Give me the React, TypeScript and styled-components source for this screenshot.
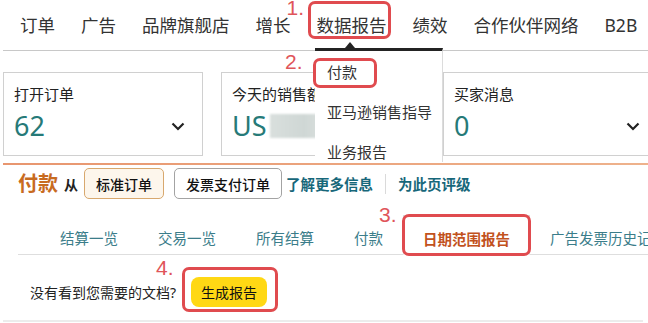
import styled, { createGlobalStyle } from 'styled-components';

const GlobalStyle = createGlobalStyle`
  html, body {
    margin: 0;
    padding: 0;
    background: #fff;
  }
  body {
    font-family: "Noto Sans", "Noto Sans CJK SC", sans-serif;
    color: #222;
  }
`;

const Page = styled.div`
  width: 648px;
  height: 323px;
  overflow: hidden;
  padding-left: 3px;
  box-sizing: border-box;
`;

// upper screenshot: nav + metric cards + open menu
const TopSection = styled.div`
  position: relative;
  height: 162px;
  overflow: hidden;
`;

const Nav = styled.nav`
  display: flex;
  align-items: center;
  height: 50px;
  padding-left: 17px;
  gap: 26px;
  border-bottom: 1px solid #c8c8c8;
`;

const NavItem = styled.span`
  position: relative;
  font-size: 17.5px;
  line-height: 20px;
  color: #333;
  white-space: nowrap;
`;

// red annotation box drawn over a part of the UI
const Marked = styled.span<{ $inset: string }>`
  position: relative;
  display: inline-flex;
  &::after {
    content: '';
    position: absolute;
    inset: ${p => p.$inset};
    border: 3px solid #e04b4f;
    border-radius: 7px;
    pointer-events: none;
  }
`;

const Num = styled.span<{ $x: number; $y: number }>`
  position: absolute;
  left: ${p => p.$x}px;
  top: ${p => p.$y}px;
  font-family: "Liberation Sans", sans-serif;
  font-size: 21px;
  line-height: 1;
  color: #e0555a;
  white-space: nowrap;
`;

const Menu = styled.div`
  position: absolute;
  top: 33px;
  left: -1.5px;
  width: 127px;
  height: 114px;
  background: #fff;
  border-top: 3px solid #232323;
  border-right: 1px solid #dcdcdc;
  z-index: 2;
  &::before {
    content: '';
    position: absolute;
    top: -9px;
    left: 30px;
    border-left: 5px solid transparent;
    border-right: 5px solid transparent;
    border-bottom: 6px solid #232323;
  }
`;

const MenuItem = styled.div`
  display: flex;
  align-items: center;
  height: 40px;
  padding-left: 12px;
  font-size: 15px;
  color: #333;
  white-space: nowrap;
`;

const MenuText = styled.span`
  line-height: 20px;
`;

const CardsRow = styled.div`
  display: grid;
  grid-template-columns: 200px 204px 215px;
  column-gap: 18px;
  margin-top: 21px;
`;

const Card = styled.div`
  height: 84px;
  box-sizing: border-box;
  border: 1px solid #d0d0d0;
  padding: 11px 17px 0 10px;
  overflow: hidden;
`;

const CardTitle = styled.div`
  font-size: 15px;
  line-height: 20px;
  color: #222;
  white-space: nowrap;
`;

const ValueRow = styled.div`
  display: flex;
  align-items: center;
  justify-content: space-between;
  margin-top: 6px;
  height: 32px;
`;

const Value = styled.span`
  display: flex;
  align-items: center;
  font-size: 27px;
  line-height: 32px;
  color: #267a78;
`;

const Blur = styled.span`
  display: inline-block;
  width: 57px;
  height: 24px;
  margin-left: 3px;
  background: linear-gradient(90deg, #d9dfdd, #cfd7d5 60%, #dde2e0);
  filter: blur(1px);
`;

const BottomSection = styled.div``;

const OrangeRule = styled.div`
  height: 2px;
  margin-top: 1px;
  background: linear-gradient(90deg, #e8966f, #eeb28c);
`;

const HeaderRow = styled.div`
  display: flex;
  align-items: center;
  height: 31px;
  margin-top: 3px;
  padding-left: 15px;
  gap: 6px;
`;

const Heading = styled.span`
  font-size: 20px;
  font-weight: 700;
  color: #c86b1f;
  line-height: 24px;
`;

const From = styled.span`
  font-size: 14px;
  font-weight: 700;
  color: #222;
`;

const ButtonGroup = styled.div`
  display: flex;
  gap: 10px;
`;

const ToggleButton = styled.button<{ $active?: boolean }>`
  height: 31px;
  padding: 0 11px;
  border-radius: 5px;
  border: 1px solid ${p => (p.$active ? '#d8a86e' : '#a3a3a3')};
  background: ${p => (p.$active ? '#fdf6ec' : '#fff')};
  font-family: inherit;
  font-size: 14px;
  font-weight: 500;
  color: #111;
`;

const Links = styled.div`
  display: flex;
  align-items: center;
  gap: 12px;
  margin-left: -2px;
`;

const LinkText = styled.span`
  font-size: 14.5px;
  font-weight: 700;
  color: #17677a;
  white-space: nowrap;
`;

const Sep = styled.span`
  width: 1px;
  height: 20px;
  background: #dadada;
`;

const TabsBar = styled.div`
  display: flex;
  height: 39px;
  margin: 16px 0 0 15px;
  padding-left: 22px;
  border-bottom: 1px solid #dedede;
`;

const Tab = styled.div<{ $active?: boolean }>`
  display: flex;
  align-items: center;
  padding: 6px 20px 0;
  font-size: 14.5px;
  color: #3b7d8a;
  white-space: nowrap;
  ${p =>
    p.$active &&
    `
    padding: 6px 19px 0;
    font-weight: 700;
    color: #c2521d;
    background: #fff;
    border: 1px solid #dcdcdc;
    border-bottom-color: #fff;
    margin-bottom: -1px;
  `}
`;

const TabMark = styled(Marked)`
  display: flex;
  align-self: stretch;
`;

const BottomRow = styled.div`
  display: flex;
  align-items: center;
  height: 30px;
  margin-top: 22px;
  padding-left: 27px;
  gap: 15px;
`;

const Prompt = styled.span`
  font-size: 14px;
  color: #222;
`;

const YellowButton = styled.button`
  height: 30px;
  padding: 0 10px;
  border: none;
  border-radius: 8px;
  background: #ffd814;
  font-family: inherit;
  font-size: 14px;
  color: #111;
`;

const BottomRule = styled.div`
  width: 640px;
  height: 2px;
  margin-top: 13px;
  background: #ececec;
`;

const Chevron = () => (
  <svg width="14" height="9" viewBox="0 0 14 9">
    <polyline points="1.5,1.5 7,7 12.5,1.5" fill="none" stroke="#222" strokeWidth="2.2" />
  </svg>
);

const navItems = ['订单', '广告', '品牌旗舰店', '增长'];
const tabs = ['结算一览', '交易一览', '所有结算', '付款'];

export default function App() {
  return (
    <Page>
      <GlobalStyle />
      <TopSection>
        <Nav>
          {navItems.map(n => (
            <NavItem key={n}>{n}</NavItem>
          ))}
          <NavItem>
            <Marked $inset="-14px -4.5px -4px -9px">数据报告</Marked>
            <Num $x={-30} $y={-18}>1.</Num>
            <Menu>
              <MenuItem style={{ height: 41 }}>
                <Marked $inset="-4px -20px -6px -14px">
                  <MenuText>付款</MenuText>
                  <Num $x={-42} $y={-11}>2.</Num>
                </Marked>
              </MenuItem>
              <MenuItem>亚马逊销售指导</MenuItem>
              <MenuItem>业务报告</MenuItem>
            </Menu>
          </NavItem>
          <NavItem>绩效</NavItem>
          <NavItem>合作伙伴网络</NavItem>
          <NavItem>B2B</NavItem>
        </Nav>
        <CardsRow>
          <Card>
            <CardTitle>打开订单</CardTitle>
            <ValueRow>
              <Value>62</Value>
              <Chevron />
            </ValueRow>
          </Card>
          <Card>
            <CardTitle>今天的销售额</CardTitle>
            <ValueRow>
              <Value>
                US<Blur />
              </Value>
            </ValueRow>
          </Card>
          <Card>
            <CardTitle>买家消息</CardTitle>
            <ValueRow>
              <Value>0</Value>
              <Chevron />
            </ValueRow>
          </Card>
        </CardsRow>
      </TopSection>

      <BottomSection>
        <OrangeRule />
        <HeaderRow>
          <Heading>付款</Heading>
          <From>从</From>
          <ButtonGroup>
            <ToggleButton $active>标准订单</ToggleButton>
            <ToggleButton>发票支付订单</ToggleButton>
          </ButtonGroup>
          <Links>
            <LinkText>了解更多信息</LinkText>
            <Sep />
            <LinkText>为此页评级</LinkText>
          </Links>
        </HeaderRow>
        <TabsBar>
          {tabs.map(t => (
            <Tab key={t}>{t}</Tab>
          ))}
          <TabMark $inset="-1px -1px -2px -1px">
            <Tab $active>日期范围报告</Tab>
            <Num $x={-24} $y={-11}>3.</Num>
          </TabMark>
          <Tab>广告发票历史记录</Tab>
        </TabsBar>
        <BottomRow>
          <Prompt>没有看到您需要的文档?</Prompt>
          <Marked $inset="-10px -11px -5px -9px">
            <YellowButton>生成报告</YellowButton>
            <Num $x={-35} $y={-20}>4.</Num>
          </Marked>
        </BottomRow>
        <BottomRule />
      </BottomSection>
    </Page>
  );
}
